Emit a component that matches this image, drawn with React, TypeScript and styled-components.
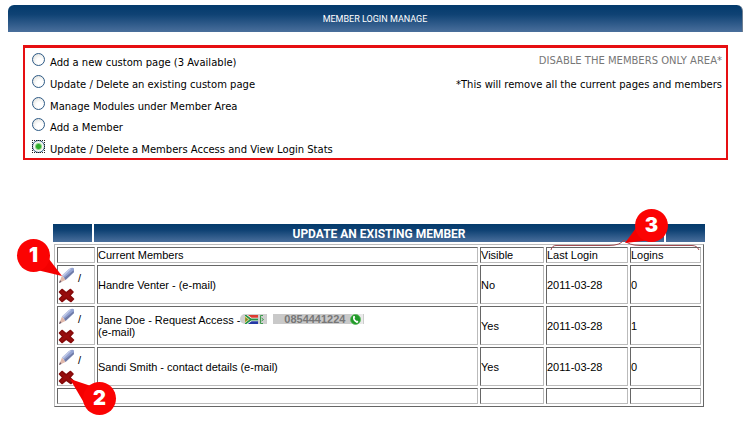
import React, { useState } from "react";
import styled, { createGlobalStyle } from "styled-components";

const GlobalStyle = createGlobalStyle`
  * { box-sizing: border-box; }
  body {
    margin: 0;
    background: #fff;
    color: #000;
    font-family: "DejaVu Sans", Verdana, sans-serif;
    font-size: 10px;
    line-height: 12px;
  }
`;

const barFill = "linear-gradient(#033a6b, #0f4274 35%, #4a6f9c)";

const Page = styled.main`
  padding: 5px 8px 24px;
`;

const TitleBar = styled.h1`
  margin: 0;
  height: 27px;
  border-radius: 6px 6px 0 0;
  background: ${barFill};
  border-right: 1px solid #6f7f92;
  color: #fff;
  font: 400 9px/29px Roboto, "Liberation Sans", Arial, sans-serif;
  text-align: center;
`;

const OptionsPanel = styled.form`
  display: flex;
  justify-content: space-between;
  margin: 13px 15px 0;
  padding: 3px 4px 0 7px;
  height: 115px;
  border: 2px solid #e60f12;
  border-top-width: 3px;
`;

const OptionList = styled.div`
  display: flex;
  flex-direction: column;
`;

const Option = styled.label`
  display: flex;
  align-items: flex-start;
  gap: 5px;
  height: 22px;
  &:last-child { height: 20px; }
`;

const OptionText = styled.span`
  padding-top: 6px;
`;

const Radio = styled.input`
  appearance: none;
  position: relative;
  flex: none;
  width: 13px;
  height: 13px;
  margin: 2px 0 0;
  border: 1px solid #2d5a86;
  border-radius: 50%;
  background: radial-gradient(circle at 60% 65%, #fff 30%, #d9dad5);
  &:checked {
    background: radial-gradient(circle, #2fae2c 0 2px, #8fd48a 3px, #f2f5f0 4px);
  }
  &:checked::before {
    content: "";
    position: absolute;
    inset: -1px;
    border: 1px dotted #222;
  }
`;

const Notes = styled.div`
  text-align: right;
`;

const DisableLink = styled.a`
  display: block;
  margin-top: 4px;
  color: #777;
  text-decoration: none;
`;

const Note = styled.p`
  margin: 12px 0 0;
`;

const Members = styled.section`
  position: relative;
  margin: 64px 38px 0 45px;
`;

const SectionBar = styled.header`
  display: grid;
  grid-template-columns: 39px 1fr 39px;
  gap: 2px;
`;

const BarCell = styled.div`
  height: 18px;
  background: ${barFill};
`;

const BarTitle = styled.h2`
  margin: 0;
  height: 18px;
  background: ${barFill};
  color: #fff;
  font: 700 12px/20px Roboto, "Liberation Sans", Arial, sans-serif;
  text-align: center;
`;

const Table = styled.table`
  width: calc(100% - 2px);
  margin: 2px 1px 0;
  table-layout: fixed;
  border-collapse: separate;
  border-spacing: 2px;
  border: 1px solid #bbb;
  border-right-color: #666;
  border-bottom-color: #666;
  font: 400 11px/12px "Liberation Sans", Arial, sans-serif;
`;

const Col = styled.col<{ $w?: number }>`
  width: ${(p) => (p.$w ? `${p.$w}px` : "auto")};
`;

const Row = styled.tr<{ $height: number }>`
  height: ${(p) => p.$height}px;
`;

const cell = `
  padding: 0;
  border: 1px solid #bbb;
  border-top-color: #666;
  border-left-color: #666;
  text-align: left;
  font-weight: 400;
  vertical-align: middle;
`;
const Th = styled.th`${cell}`;
const Td = styled.td`${cell}`;

const Actions = styled.div`
  display: grid;
  grid-template-columns: 17px auto;
  justify-content: start;
  align-items: end;
  column-gap: 3px;
  row-gap: 3px;
  height: 37px;
`;

const IconButton = styled.button`
  display: block;
  padding: 0;
  border: 0;
  background: none;
  line-height: 0;
  cursor: pointer;
`;

const Contact = styled.span`
  display: inline-flex;
  align-items: center;
  gap: 6px;
  height: 11px;
  vertical-align: top;
`;

const FlagTag = styled.span`
  display: flex;
  align-items: center;
  width: 27px;
  height: 10px;
  padding-left: 5px;
  border-right: 1px solid #ccc;
  border-radius: 5px 0 0 5px;
  background: #cfcfcf;
`;

const PhoneTag = styled.a`
  display: flex;
  align-items: center;
  justify-content: flex-end;
  gap: 5px;
  width: 91px;
  height: 10px;
  padding-right: 2px;
  border-right: 1px solid #ccc;
  background: linear-gradient(90deg, #c9c9c9 85%, #eee);
  color: #777;
  font: 700 11px/10px "Liberation Sans", Arial, sans-serif;
  text-decoration: none;
`;

const Callout = styled.div<{ $top: number; $left?: number; $right?: number }>`
  position: absolute;
  top: ${(p) => p.$top}px;
  ${(p) => (p.$left !== undefined ? `left: ${p.$left}px;` : "")}
  ${(p) => (p.$right !== undefined ? `right: ${p.$right}px;` : "")}
  width: 33px;
  height: 33px;
  color: #fff;
  font: 900 20px/33px Inter, "Liberation Sans", sans-serif;
  text-align: center;
  pointer-events: none;
  svg {
    position: absolute;
    top: 0;
    left: 0;
    overflow: visible;
  }
  span { position: relative; }
`;

const Brace = styled.svg`
  position: absolute;
  top: 16px;
  right: 6px;
  overflow: visible;
  pointer-events: none;
`;

const Pencil = () => (
  <svg width="17" height="17" viewBox="0 0 17 17" aria-hidden="true">
    <path d="M4 8.500 11 2Q14.500 0 16 1.500V5L7.500 13Z" fill="#95a4d2" />
    <path d="M4 8.500 11 2 13.500 1.500 5.500 9.500Z" fill="#c3cbe8" />
    <path d="M6 11 15.500 3.200 16 5 7.500 13Z" fill="#717ca8" />
    <path d="M4 8.500 7.500 13 1 16Z" fill="#dfb7aa" />
    <path d="M2 13 3.500 14.900 1 16Z" fill="#6b5a6c" />
  </svg>
);

const Cross = () => (
  <svg width="17" height="15" viewBox="0 0 17 15" aria-hidden="true">
    <path
      d="M4 1.500 8.200 4.800 12.500 1.500 15 4 11.800 7.500 15.500 11 13 13.500 8.200 10.200 4 13.500 1.500 11 4.800 7.500 1.500 4Z"
      fill="#980d0d"
      stroke="#860a0a"
      strokeWidth="1.600"
      strokeLinejoin="round"
    />
  </svg>
);

const Flag = () => (
  <svg width="19" height="9" viewBox="0 0 19 9" aria-hidden="true">
    <rect width="13" height="4.500" fill="#dc3b32" />
    <rect y="4.500" width="13" height="4.500" fill="#2438a5" />
    <path d="M0 0 6 4.500 0 9M5 4.500H13" stroke="#fff" strokeWidth="3.400" fill="none" />
    <path d="M0 0 6 4.500 0 9M5 4.500H13" stroke="#279248" strokeWidth="1.800" fill="none" />
    <path d="M0 1.800 3.500 4.500 0 7.200Z" fill="#6f8a2c" stroke="#e5bd3a" strokeWidth=".7" />
    <path d="M18 .5H15.500V8.500H18M16.500 3 18.500 4.500 16.500 6" stroke="#3f9a4d" fill="none" />
  </svg>
);

const Handset = () => (
  <svg width="11" height="11" viewBox="0 0 11 11" aria-hidden="true">
    <circle cx="5.500" cy="5.500" r="5" fill="#219a29" stroke="#5ab95c" strokeWidth=".8" />
    <path d="M3.800 2.500Q3.200 6.500 7.500 8.300" stroke="#fff" strokeWidth="1.500" fill="none" />
    <path d="M3.300 3.200 5 2.700M6.500 8.500 7.800 7" stroke="#fff" strokeWidth="1.700" />
  </svg>
);

const Balloon = ({ tail }: { tail: string }) => (
  <svg width="33" height="33" viewBox="0 0 33 33" aria-hidden="true">
    <path d={tail} fill="#f40000" />
    <circle cx="16.500" cy="16.500" r="16.500" fill="#fb0303" />
  </svg>
);

const options = [
  "Add a new custom page (3 Available)",
  "Update / Delete an existing custom page",
  "Manage Modules under Member Area",
  "Add a Member",
  "Update / Delete a Members Access and View Login Stats",
];

const members = [
  { name: "Handre Venter - (e-mail)", visible: "No", last: "2011-03-28", logins: 0 },
  { name: "Jane Doe - Request Access -", phone: "0854441224", visible: "Yes", last: "2011-03-28", logins: 1 },
  { name: "Sandi Smith - contact details (e-mail)", visible: "Yes", last: "2011-03-28", logins: 0 },
];

export default function App() {
  const [selected, setSelected] = useState(4);
  return (
    <Page>
      <GlobalStyle />
      <TitleBar>MEMBER LOGIN MANAGE</TitleBar>
      <OptionsPanel>
        <OptionList>
          {options.map((text, i) => (
            <Option key={text}>
              <Radio type="radio" name="task" checked={selected === i} onChange={() => setSelected(i)} />
              <OptionText>{text}</OptionText>
            </Option>
          ))}
        </OptionList>
        <Notes>
          <DisableLink href="#disable">DISABLE THE MEMBERS ONLY AREA*</DisableLink>
          <Note>*This will remove all the current pages and members</Note>
        </Notes>
      </OptionsPanel>

      <Members>
        <SectionBar>
          <BarCell />
          <BarTitle>UPDATE AN EXISTING MEMBER</BarTitle>
          <BarCell />
        </SectionBar>
        <Table>
          <colgroup>
            <Col $w={38} />
            <Col />
            <Col $w={64} />
            <Col $w={82} />
            <Col $w={71} />
          </colgroup>
          <thead>
            <Row $height={16}>
              <Td />
              <Th scope="col">Current Members</Th>
              <Th scope="col">Visible</Th>
              <Th scope="col">Last Login</Th>
              <Th scope="col">Logins</Th>
            </Row>
          </thead>
          <tbody>
            {members.map((m) => (
              <Row key={m.name} $height={39}>
                <Td>
                  <Actions>
                    <IconButton type="button" aria-label="Edit member"><Pencil /></IconButton>
                    <span>/</span>
                    <IconButton type="button" aria-label="Delete member"><Cross /></IconButton>
                  </Actions>
                </Td>
                <Td>
                  {m.name}
                  {m.phone && (
                    <>
                      <Contact>
                        <FlagTag><Flag /></FlagTag>
                        <PhoneTag href={`tel:${m.phone}`}>{m.phone}<Handset /></PhoneTag>
                      </Contact>
                      <br />
                      (e-mail)
                    </>
                  )}
                </Td>
                <Td>{m.visible}</Td>
                <Td>{m.last}</Td>
                <Td>{m.logins}</Td>
              </Row>
            ))}
            <Row $height={16}>
              <Td /><Td /><Td /><Td /><Td />
            </Row>
          </tbody>
        </Table>

        <Brace width="148" height="11" viewBox="0 0 148 11" aria-hidden="true">
          <path
            d="M0 10Q1 5.500 5 5.500H58Q69 5.500 73 0Q78 5.500 89 5.500H141Q146 5.500 148 10"
            fill="none"
            stroke="#a14a50"
          />
        </Brace>
        <Callout $top={15} $left={-36}>
          <Balloon tail="M20 31 45 37 32 20Z" />
          <span>1</span>
        </Callout>
        <Callout $top={158} $left={30}>
          <Balloon tail="M4 26-13-3 17 7Z" />
          <span>2</span>
        </Callout>
        <Callout $top={-15} $right={37}>
          <Balloon tail="M1 19-10 34 17 31Z" />
          <span>3</span>
        </Callout>
      </Members>
    </Page>
  );
}
